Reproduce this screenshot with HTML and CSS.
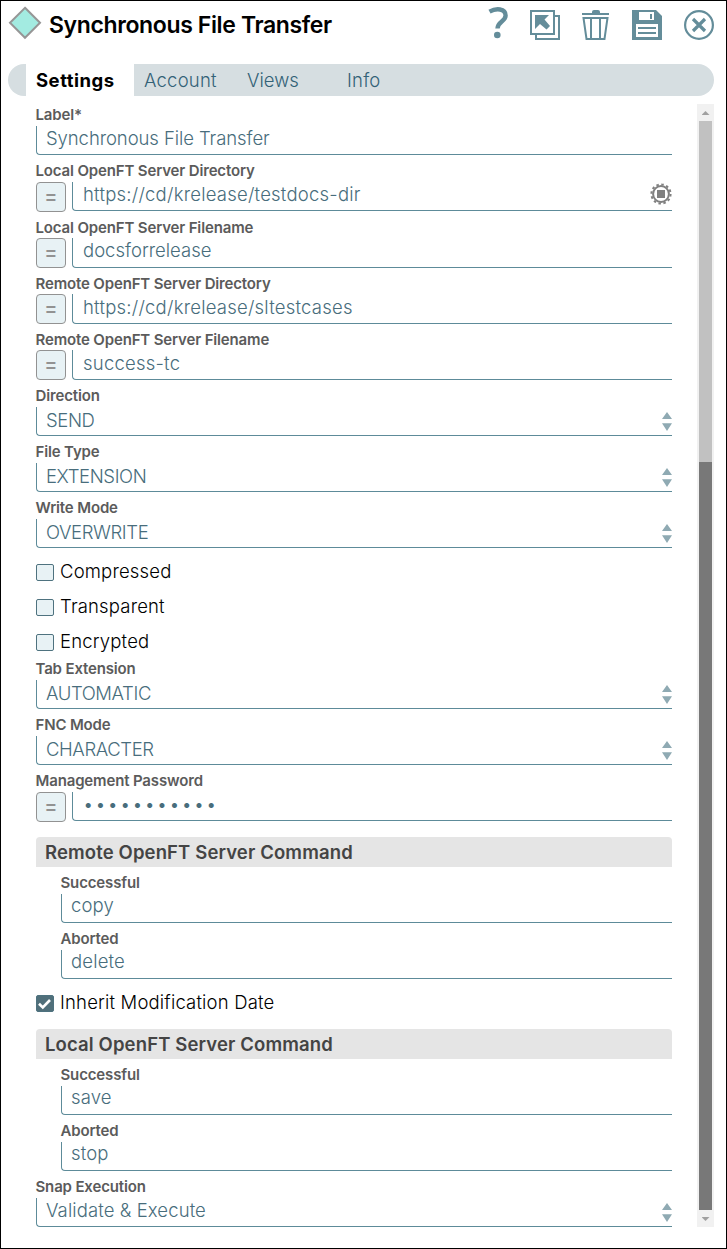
FILE: index.html
```html
<!doctype html>
<html lang="en">
<head>
  <meta charset="UTF-8">
  <title>Synchronous File Transfer</title>
  <link rel="stylesheet" href="styles.css">
</head>
<body>
<div class="dialog">
  <header class="header">
    <svg class="snap-icon" width="34" height="34" viewBox="0 0 34 34"><path d="M17 1.8L32 16.8L17 31.8L2 16.8Z" fill="#a3ebe1" stroke="#969696" stroke-width="2"/></svg>
    <h1 class="title">Synchronous File Transfer</h1>
    <div class="actions">
      <svg width="20" height="32" viewBox="0 0 20 32"><path d="M1.5 4.6C8 1 17.6 1.2 17.6 8.5C17.6 14.5 9.5 14.5 9.5 21.5" fill="none" stroke="#648d9a" stroke-width="4.4"/><circle cx="9.3" cy="28" r="3.3" fill="#648d9a"/></svg>
      <svg width="30" height="30" viewBox="0 0 30 30"><path d="M1 1H24V24H1Z" fill="none" stroke="#648d9a" stroke-width="2"/><path d="M25 6H29V29H6V25" fill="none" stroke="#648d9a" stroke-width="2"/><path d="M5 5H19L14.5 9.5L20 16L16.5 19.5L10 14L5 19Z" fill="#648d9a"/></svg>
      <svg width="28" height="30" viewBox="0 0 28 30"><path d="M0 3H10V2Q10 0 12 0H16Q18 0 18 2V3H27V5H0Z" fill="#648d9a"/><path d="M1.5 8H25.5L22.5 29H4.5ZM9 8V29M18 8V29" fill="none" stroke="#648d9a" stroke-width="2"/></svg>
      <svg width="30" height="30" viewBox="0 0 30 30"><path d="M0 0H24L30 6V30H0Z" fill="#648d9a"/><path d="M7 2H22V10H7ZM4 14H26V27H4Z" fill="#fff"/><path d="M18 4H20V9H18ZM6 17H24V19H6ZM6 22H24V24H6Z" fill="#648d9a"/></svg>
      <svg width="30" height="30" viewBox="0 0 30 30"><circle cx="15" cy="15" r="13.9" fill="none" stroke="#648d9a" stroke-width="2.2"/><path d="M9 9L21 21M21 9L9 21" stroke="#648d9a" stroke-width="3.2"/></svg>
    </div>
  </header>

  <nav class="tabs">
    <span class="tab active">Settings</span>
    <span class="tab account">Account</span>
    <span class="tab views">Views</span>
    <span class="tab info">Info</span>
  </nav>

  <div class="content">
    <main class="form">
      <div class="field"><label>Label*</label><div class="value name">Synchronous File Transfer</div></div>
      <div class="field dir">
        <label>Local OpenFT Server Directory</label>
        <div class="row"><button class="expr">=</button><div class="value url">https://cd/krelease/testdocs-dir
          <svg class="gear" width="22" height="22" viewBox="0 0 22 22"><circle cx="11" cy="11" r="9.6" fill="none" stroke="#808080" stroke-width="2" stroke-dasharray="2.5 2.526"/><circle cx="11" cy="11" r="7.9" fill="none" stroke="#808080" stroke-width="2"/><path d="M7 7H15V15H7Z" fill="#808080"/></svg>
        </div></div>
      </div>
      <div class="field tall">
        <label>Local OpenFT Server Filename</label>
        <div class="row"><button class="expr">=</button><div class="value">docsforrelease</div></div>
      </div>
      <div class="field tall">
        <label>Remote OpenFT Server Directory</label>
        <div class="row"><button class="expr">=</button><div class="value url low">https://cd/krelease/sltestcases</div></div>
      </div>
      <div class="field tall">
        <label>Remote OpenFT Server Filename</label>
        <div class="row"><button class="expr">=</button><div class="value url low">success-tc</div></div>
      </div>
      <div class="field"><label>Direction</label><div class="value select">SEND</div></div>
      <div class="field"><label>File Type</label><div class="value select">EXTENSION</div></div>
      <div class="field"><label>Write Mode</label><div class="value select">OVERWRITE</div></div>

      <div class="checks">
        <div class="check"><span class="box"></span><span class="text">Compressed</span></div>
        <div class="check"><span class="box"></span><span class="text">Transparent</span></div>
        <div class="check"><span class="box"></span><span class="text">Encrypted</span></div>
      </div>

      <div class="field"><label>Tab Extension</label><div class="value select">AUTOMATIC</div></div>
      <div class="field"><label>FNC Mode</label><div class="value select">CHARACTER</div></div>
      <div class="field">
        <label>Management Password</label>
        <div class="row"><button class="expr">=</button><div class="value password">•••••••••••</div></div>
      </div>

      <h2 class="section">Remote OpenFT Server Command</h2>
      <div class="group">
        <div class="field"><label>Successful</label><div class="value">copy</div></div>
        <div class="field"><label>Aborted</label><div class="value">delete</div></div>
      </div>

      <div class="check inherit">
        <span class="box checked"><svg width="17" height="17" viewBox="0 0 17 17"><path d="M3 8.8L6.8 12.5L14 5" fill="none" stroke="#fff" stroke-width="2.6"/></svg></span><span class="text">Inherit Modification Date</span>
      </div>

      <h2 class="section">Local OpenFT Server Command</h2>
      <div class="group">
        <div class="field"><label>Successful</label><div class="value">save</div></div>
        <div class="field"><label>Aborted</label><div class="value">stop</div></div>
      </div>
      <div class="field"><label>Snap Execution</label><div class="value select execution">Validate &amp; Execute</div></div>
    </main>

    <div class="scrollbar">
      <span class="up"></span>
      <span class="thumb"></span>
      <span class="rest"></span>
      <span class="down"></span>
    </div>
  </div>
</div>
</body>
</html>
```
FILE: styles.css
```css
*{
  box-sizing: border-box;
}

body{
  margin: 0;
  font-family: Inter, "Open Sans", sans-serif;
  background: #fff;
}

.dialog{
  height: 1249px;
  border: 1px solid #000;
  overflow: hidden;
}

/* header */
.header{
  display: flex;
  height: 63px;
  padding: 5px 12px 0 7px;
}

.title{
  margin: 3px 0 0 7px;
  font-size: 23px;
  line-height: 32px;
  font-weight: 600;
  letter-spacing: -0.37px;
  white-space: nowrap;
}

.actions{
  display: flex;
  margin-left: auto;
  padding-top: 4px;
}

.actions svg{
  margin-left: 22px;
}

.actions svg:first-child{
  margin: -3px 0 0;
}

/* tabs */
.tabs{
  display: flex;
  height: 32px;
  margin: 0 12px 0 7px;
  padding-left: 18px;
  border-radius: 16px;
  background: #d6dee1;
  font-size: 18.5px;
  line-height: 32px;
  color: #336277;
}

.tab{
  font-weight: 300;
}

.active{
  width: 108px;
  padding-left: 10px;
  background: #fff;
  color: #000;
  font-weight: 700;
  letter-spacing: 0.5px;
}

.account{
  width: 103px;
  padding-left: 10px;
  letter-spacing: 0.2px;
}

.views{
  width: 100px;
  padding-left: 10px;
}

.info{
  padding-left: 10px;
  letter-spacing: 0.2px;
}

/* form */
.content{
  display: flex;
  justify-content: space-between;
  padding: 8px 12px 0 35px;
}

.form{
  width: 636px;
  padding-top: 3px;
}

.field{
  margin-bottom: 8px;
}

.field label{
  display: block;
  height: 19px;
  margin-left: -0.5px;
  font-size: 15px;
  line-height: 15px;
  font-weight: 600;
  letter-spacing: -0.15px;
  color: #5b5b5b;
}

.value{
  display: flex;
  height: 29px;
  padding-left: 9px;
  border: solid #5d8b99;
  border-width: 0 0 1px 1px;
  border-bottom-left-radius: 4px;
  font-size: 18.5px;
  line-height: 25px;
  font-weight: 300;
  color: #486d7c;
  white-space: nowrap;
}

.name{
  letter-spacing: -0.08px;
}

.url{
  letter-spacing: 0.22px;
}

.low{
  line-height: 27px;
}

.row{
  display: flex;
  gap: 6px;
}

.row .value{
  flex: 1;
  padding-left: 10px;
}

.dir{
  margin-bottom: 9px;
}

.tall label{
  height: 18px;
}

.tall .value{
  height: 30px;
}

.expr{
  width: 30px;
  height: 30px;
  margin-bottom: -1px;
  padding: 0;
  border: 1px solid #929292;
  border-radius: 4px;
  background: #e8f2f5;
  color: #929292;
  font: 600 19px/26px Inter, sans-serif;
}

.gear{
  margin: 1px 0 0 auto;
}

.select{
  line-height: 27px;
  letter-spacing: -0.4px;
}

.select::after{
  content: "";
  width: 10px;
  height: 19px;
  margin: 5px 0 0 auto;
  background: #8faab3;
  clip-path: polygon(50% 0, 100% 37%, 0 37%, 0 59%, 100% 59%, 50% 100%, 0 59%, 0 37%);
}

.execution{
  letter-spacing: 0.1px;
  line-height: 25px;
}

.password{
  letter-spacing: 1.9px;
}

.checks{
  margin: -1px 0 1px;
}

.check{
  display: flex;
  align-items: center;
  height: 35px;
  gap: 6px;
  font-size: 18.5px;
  font-weight: 300;
  letter-spacing: 0.17px;
}

.text{
  margin-top: -3px;
}

.box{
  width: 18px;
  height: 17px;
  border: 1px solid #4e727f;
  border-radius: 2px;
  background: #e8f2f5;
}

.checked{
  background: #506f7a;
}

.checked svg{
  display: block;
  margin: -1px;
}

.section{
  height: 30px;
  margin: 16px 0 8px;
  padding-left: 9px;
  border-radius: 4px 4px 0 0;
  background: #e5e5e5;
  font-size: 18.5px;
  line-height: 30px;
  font-weight: 600;
  letter-spacing: 0.13px;
  color: #444;
}

.group{
  padding-left: 25px;
}

.group .value{
  line-height: 23px;
  letter-spacing: 0.15px;
}

.inherit{
  margin: -1px 0 -8px;
}

/* scrollbar */
.scrollbar{
  display: flex;
  flex-direction: column;
  width: 17px;
  height: 1123px;
  background: #f1f1f1;
}

.up, .down{
  height: 17px;
}

.up::after, .down::after{
  content: "";
  display: block;
  margin: 7px auto 0;
  width: 8px;
  height: 4px;
  background: #a0a0a0;
  clip-path: polygon(50% 0, 100% 100%, 0 100%);
}

.down::after{
  clip-path: polygon(0 0, 100% 0, 50% 100%);
}

.thumb, .rest{
  height: 341px;
  margin: 0 2px;
  background: #c1c1c1;
}

.rest{
  height: 748px;
  background: #787878;
}
```
